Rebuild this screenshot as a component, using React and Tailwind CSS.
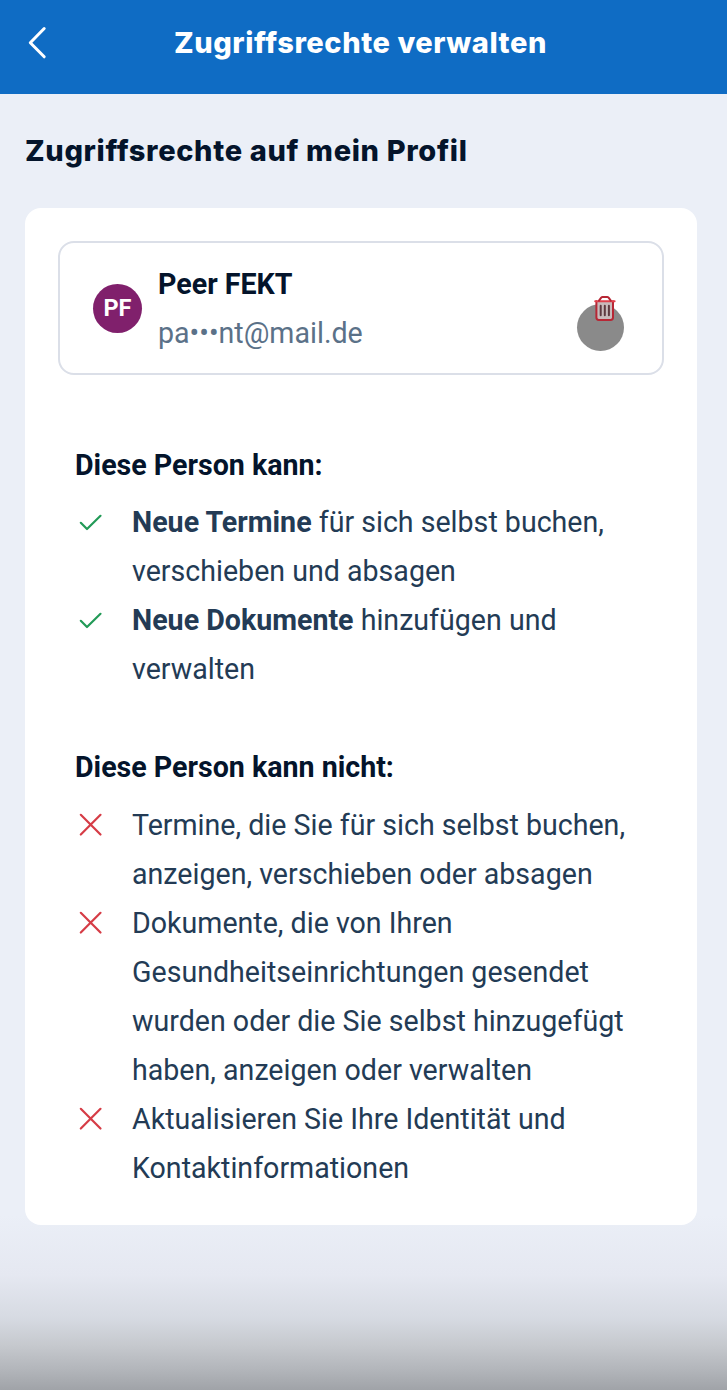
const ALLOWED = [
  { strong: 'Neue Termine', lines: [' für sich selbst buchen,', 'verschieben und absagen'] },
  { strong: 'Neue Dokumente', lines: [' hinzufügen und', 'verwalten'] },
];

const DENIED = [
  { lines: ['Termine, die Sie für sich selbst buchen,', 'anzeigen, verschieben oder absagen'] },
  {
    lines: [
      'Dokumente, die von Ihren',
      'Gesundheitseinrichtungen gesendet',
      'wurden oder die Sie selbst hinzugefügt',
      'haben, anzeigen oder verwalten',
    ],
  },
  { lines: ['Aktualisieren Sie Ihre Identität und', 'Kontaktinformationen'] },
];


function BackIcon() {
  return (
    <svg width="20" height="34" viewBox="0 0 20 34" fill="none" stroke="white"
         strokeWidth="3" strokeLinecap="round" strokeLinejoin="round">
      <path d="M17.2 2.5 3.3 16.8l13.9 14" />
    </svg>
  );
}

function CheckIcon() {
  return (
    <svg width="24" height="24" viewBox="0 0 24 24" fill="none" stroke="#229a57"
         strokeWidth="2.2" strokeLinecap="round" strokeLinejoin="round">
      <path d="M1.8 11.8 8 18 21.5 4.8" />
    </svg>
  );
}

function CrossIcon() {
  return (
    <svg width="24" height="24" viewBox="0 0 24 24" fill="none" stroke="#d63c46"
         strokeWidth="2.2" strokeLinecap="round">
      <path d="M1.8 1.8 21.5 21.5M21.5 1.8 1.8 21.5" />
    </svg>
  );
}

function TrashIcon() {
  return (
    <svg width="22" height="26" viewBox="0 0 22 26" fill="none" stroke="#b72735"
         strokeWidth="2" strokeLinecap="round" strokeLinejoin="round">
      <path d="M2.4 6.3v16.2c0 1.6 1 2.4 2.4 2.4h11.8c1.4 0 2.4-.8 2.4-2.4V6.3" fill="#c9babb" />
      <path d="M1.2 6.2h19.4" stroke="#e0404c" />
      <path d="M5 5.7l2.2-3c.4-.5.8-.8 1.4-.8h4.6c.6 0 1 .3 1.4.8l2.2 3" />
      <path d="M6.7 10.8v9.4M10.8 10.8v9.4M14.9 10.8v9.4" stroke="#5e3a40" />
    </svg>
  );
}


function RightsList({ title, items, icon }) {
  return (
    <section>
      <h2 className="mb-[8.4px] font-bold text-[#04142b]">{title}</h2>
      <ul>
        {items.map(item => (
          <li key={item.lines[0]} className="flex gap-[29px] pl-1">
            <span className="flex h-[49px] w-6 shrink-0 items-center">{icon}</span>
            <p className="whitespace-nowrap">
              {item.strong && <strong className="font-bold">{item.strong}</strong>}
              {item.lines.map((line, i) => (
                <span key={line}>{i > 0 && <br />}{line}</span>
              ))}
            </p>
          </li>
        ))}
      </ul>
    </section>
  );
}


export default function App() {
  return (
    <div className="flex h-[1390px] w-[727px] flex-col overflow-hidden bg-[#ebeff7] bg-[linear-gradient(to_bottom,#ebeff7_0,#ebeff7_1215px,#e5e8f1_1275px,#d6dae2_1318px,#c6c9ce_1345px,#b2b5ba_1370px,#a0a3a8_1390px)] font-['Roboto',sans-serif]">
      <header className="flex h-[94px] shrink-0 items-center bg-[#0f6cc4] pb-2 pl-[27px]">
        <button aria-label="Zurück" className="w-[147px]"><BackIcon /></button>
        <h1 className="whitespace-nowrap font-['Inter',sans-serif] text-[29px] font-extrabold tracking-[0.57px] text-white">
          Zugriffsrechte verwalten
        </h1>
      </header>

      <main className="flex flex-col px-[25px]">
        <h2 className="mt-9 h-[78px] whitespace-nowrap font-['Inter',sans-serif] text-[29px] font-extrabold leading-[42px] tracking-[0.66px] text-[#04142b]">
          Zugriffsrechte auf mein Profil
        </h2>

        <div className="h-[1017px] w-[672px] rounded-2xl bg-white px-[33px] pt-[33px] text-[28.6px] leading-[49px] text-[#233b55]">
          <div className="flex h-[134px] w-[606px] items-center rounded-[16px] border-2 border-[#dbdfe8] pl-[33px]">
            <div className="flex h-[49px] w-[49px] items-center justify-center rounded-full bg-[#80206c] text-[23.5px] font-bold text-white">
              PF
            </div>
            <div className="ml-4 grow whitespace-nowrap pt-px">
              <p className="font-bold text-[#04142b]">Peer FEKT</p>
              <p className="text-[#5b7188]">pa•••nt@mail.de</p>
            </div>
            <button aria-label="Zugriff entfernen" className="relative mr-[46px]">
              {/* touch indicator */}
              <span className="absolute -left-[17px] top-[9px] size-[47px] rounded-full bg-[#8a8a8a]" />
              <span className="relative block"><TrashIcon /></span>
            </button>
          </div>

          <div className="flex flex-col gap-[49px] pl-[17px] pt-[66px]">
            <RightsList title="Diese Person kann:" items={ALLOWED} icon={<CheckIcon />} />
            <RightsList title="Diese Person kann nicht:" items={DENIED} icon={<CrossIcon />} />
          </div>
        </div>
      </main>
    </div>
  );
}
